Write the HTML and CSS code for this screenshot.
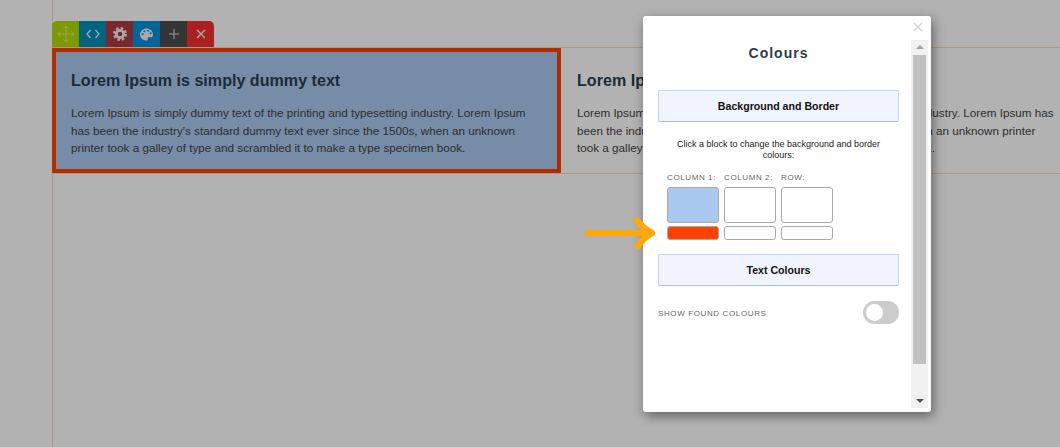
FILE: index.html
```html
<!DOCTYPE html>
<html lang="en">
<head>
<meta charset="utf-8">
<title>Colours</title>
<link rel="stylesheet" href="styles.css">
</head>
<body>
<div class="page">
  <div class="toolbar">
    <span class="tool tool-move"><svg width="18" height="18" viewBox="0 0 18 18" fill="none" stroke="currentColor" stroke-width=".8"><path d="M9 1v16M1 9h16M6.500 3.500 9 1l2.500 2.500M6.500 14.500 9 17l2.500-2.500M3.500 6.500 1 9l2.500 2.500M14.500 6.500 17 9l-2.500 2.500"/></svg></span>
    <span class="tool tool-code"><svg width="14" height="10" viewBox="0 0 14 10" fill="none" stroke="currentColor" stroke-width="1.200"><path d="M4.500 1 1 5l3.500 4M9.500 1 13 5 9.500 9"/></svg></span>
    <span class="tool tool-gear"><svg width="14" height="14" viewBox="0 0 14 14" fill="none" stroke="currentColor"><circle cx="7" cy="7" r="3.700" stroke-width="2.800"/><circle cx="7" cy="7" r="5.800" stroke-width="2.400" stroke-dasharray="2.500 2.050"/></svg></span>
    <span class="tool tool-palette"><svg width="13" height="13" viewBox="0 0 15 14"><path fill="currentColor" fill-rule="evenodd" d="M7.500 0C3.400 0 0 3 0 7s3.400 7 7.500 7c1.300 0 1.800-.8 1.500-1.800-.3-1 .2-1.900 1.300-1.900h2.200c1.500 0 2.500-1.200 2.500-3C15 3 11.600 0 7.500 0ZM3 7.800a1.200 1.200 0 1 1 0-2.400 1.200 1.200 0 0 1 0 2.400Zm2-3.300a1.200 1.200 0 1 1 0-2.400 1.200 1.200 0 0 1 0 2.400Zm4.500-.6a1.200 1.200 0 1 1 0-2.400 1.200 1.200 0 0 1 0 2.400Zm2.700 3a1.200 1.200 0 1 1 0-2.400 1.200 1.200 0 0 1 0 2.400Z"/></svg></span>
    <span class="tool tool-add"><svg width="12" height="12" viewBox="0 0 12 12" fill="none" stroke="currentColor" stroke-width="1.100"><path d="M6 1v10M1 6h10"/></svg></span>
    <span class="tool tool-close"><svg width="10" height="10" viewBox="0 0 10 10" fill="none" stroke="currentColor" stroke-width="1.400"><path d="m1 1 8 8M9 1 1 9"/></svg></span>
  </div>
  <div class="row">
    <div class="col col-first">
      <h2 class="col-title">Lorem Ipsum is simply dummy text</h2>
      <p class="col-text">Lorem Ipsum is simply dummy text of the printing and typesetting industry. Lorem Ipsum has been the industry's standard dummy text ever since the 1500s, when an unknown printer took a galley of type and scrambled it to make a type specimen book.</p>
    </div>
    <div class="col col-second">
      <h2 class="col-title">Lorem Ipsum is simply dummy text</h2>
      <p class="col-text">Lorem Ipsum is simply dummy text of the printing and typesetting industry. Lorem Ipsum has been the industry's standard dummy text ever since the 1500s, when an unknown printer took a galley of type and scrambled it to make a type specimen book.</p>
    </div>
  </div>
</div>
<div class="overlay"></div>
<div class="modal">
  <div class="modal-body">
    <h3 class="modal-title">Colours</h3>
    <div class="section-btn">Background and Border</div>
    <p class="hint">Click a block to change the background and border colours:</p>
    <div class="swatches">
      <div class="swatch-col">
        <span class="swatch-label">COLUMN 1:</span>
        <span class="swatch swatch-bg swatch-blue"></span>
        <span class="swatch swatch-border swatch-red"></span>
      </div>
      <div class="swatch-col">
        <span class="swatch-label">COLUMN 2:</span>
        <span class="swatch swatch-bg"></span>
        <span class="swatch swatch-border"></span>
      </div>
      <div class="swatch-col">
        <span class="swatch-label">ROW:</span>
        <span class="swatch swatch-bg"></span>
        <span class="swatch swatch-border"></span>
      </div>
    </div>
    <div class="section-btn">Text Colours</div>
    <div class="found">
      <span class="found-label">SHOW FOUND COLOURS</span>
      <span class="toggle"><span class="knob"></span></span>
    </div>
  </div>
  <div class="scrollbar">
    <span class="scroll-up"></span>
    <span class="scroll-thumb"></span>
    <span class="scroll-down"></span>
  </div>
  <span class="modal-close"><svg width="10" height="10" viewBox="0 0 10 10" fill="none" stroke="currentColor" stroke-width="1.500"><path d="m.8.800 8.400 8.400M9.200.800.800 9.200"/></svg></span>
</div>
<svg class="arrow" width="74" height="34" viewBox="0 0 74 34" fill="none" stroke="#ffa80a" stroke-linecap="round" stroke-linejoin="round"><path d="M4 17h62" stroke-width="6"/><path d="M53 5Q60 13 68 17 60 21 54 30" stroke-width="6.500"/></svg>
</body>
</html>
```
FILE: styles.css
```css
* { box-sizing: border-box; }
html, body { margin: 0; height: 100%; }
body {
  font-family: "Liberation Sans", Arial, sans-serif;
  background: #fff;
  overflow: hidden;
}
.page {
  height: 447px;
  margin-left: 52px;
  padding-top: 21px;
  border-left: 1px solid #f7dcc2;
}
.toolbar {
  display: flex;
  width: 162px;
  height: 26px;
  margin-left: -1px;
  border-radius: 5px 5px 0 0;
  overflow: hidden;
}
.tool {
  flex: 0 0 27px;
  display: flex;
  align-items: center;
  justify-content: center;
  color: #f2f2f2;
}
.tool-move { background: #b5dc00; color: #e6f2a0; }
.tool-code { background: #0090b8; }
.tool-gear { background: #ae3c3f; }
.tool-palette { background: #0091da; }
.tool-add { background: #4d4d4d; color: #d8d8d8; }
.tool-close { background: #f53030; }
.row {
  display: grid;
  grid-template-columns: 509px 1fr;
  height: 127px;
  margin-left: -1px;
  border-top: 1px solid #f7dcc2;
  border-bottom: 1px solid #f7dcc2;
}
.col { min-width: 0; }
.col-first {
  padding: 19px 15px 0;
  border: 4px solid #ff4000;
  background: #a9c9f0;
}
.col-second {
  padding: 23px 4px 0 16px;
}
.col-title {
  margin: 0 0 15px;
  font-size: 16.100px;
  line-height: 18px;
  font-weight: 700;
  color: #2c3e50;
}
.col-text {
  margin: 0;
  font-size: 11.700px;
  line-height: 17.500px;
  color: #444;
}
.overlay {
  position: absolute;
  inset: 0;
  background: rgba(0, 0, 0, .3);
}
.modal {
  position: absolute;
  left: 643px;
  top: 16px;
  width: 288px;
  height: 396px;
  display: flex;
  background: #fff;
  border-radius: 3px;
  box-shadow: 2px 4px 12px rgba(0, 0, 0, .45);
}
.modal-body {
  flex: 1;
  min-width: 0;
  padding: 29px 12px 0 15px;
}
.modal-title {
  margin: 0 0 28px;
  text-align: center;
  font-size: 14px;
  line-height: 17px;
  font-weight: 700;
  letter-spacing: 1px;
  color: #2c3e50;
}
.section-btn {
  height: 32px;
  display: flex;
  align-items: center;
  justify-content: center;
  font-size: 10.600px;
  font-weight: 700;
  color: #111;
  background: #f0f4fc;
  border: 1px solid #c5d5f0;
  border-bottom-color: #a9bfe3;
  border-radius: 2px;
}
.hint {
  margin: 17px 0 0;
  padding: 0 15px;
  text-align: center;
  font-size: 9px;
  line-height: 10.500px;
  color: #222;
}
.swatches {
  display: flex;
  gap: 5px;
  margin: 12px 0 14px 9px;
}
.swatch-col {
  display: flex;
  flex-direction: column;
  width: 52px;
}
.swatch-label {
  height: 15px;
  font-size: 8px;
  line-height: 12px;
  letter-spacing: .6px;
  white-space: nowrap;
  color: #666;
}
.swatch {
  display: block;
  background: #fff;
  border: 1px solid #aaa;
  border-radius: 3px;
}
.swatch-bg { height: 36px; }
.swatch-border { height: 14px; margin-top: 3px; }
.swatch-blue { background: #a9c9f0; }
.swatch-red { background: #ff4000; }
.found {
  display: flex;
  align-items: center;
  justify-content: space-between;
  margin-top: 15px;
}
.found-label {
  font-size: 8px;
  line-height: 11px;
  padding-top: 1px;
  letter-spacing: .62px;
  color: #666;
}
.toggle {
  display: flex;
  align-items: center;
  width: 36px;
  height: 23px;
  padding-left: 3px;
  background: #ccc;
  border-radius: 12px;
}
.knob {
  width: 17px;
  height: 17px;
  background: #fff;
  border-radius: 50%;
}
.scrollbar {
  flex: 0 0 17px;
  display: flex;
  flex-direction: column;
  align-items: center;
  height: 368px;
  margin: 24px 3px 0 0;
  padding: 5px 0;
  background: #f1f1f1;
}
.scroll-up, .scroll-down {
  width: 0;
  height: 0;
  border-left: 4px solid transparent;
  border-right: 4px solid transparent;
}
.scroll-up { border-bottom: 4px solid #a3a3a3; }
.scroll-down { margin-top: auto; border-top: 4px solid #505050; }
.scroll-thumb {
  width: 13px;
  height: 309px;
  margin-top: 6px;
  background: #c1c1c1;
}
.modal-close {
  position: absolute;
  top: 6px;
  right: 8px;
  display: flex;
  color: #d4d4d4;
}
.arrow {
  position: absolute;
  left: 584px;
  top: 216px;
}
```
